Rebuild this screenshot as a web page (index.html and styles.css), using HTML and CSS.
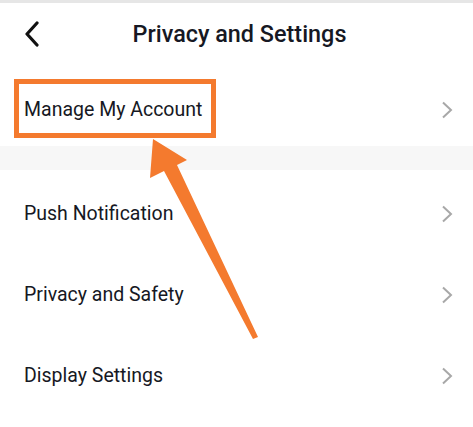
FILE: index.html
```html
<!DOCTYPE html>
<html>
<head>
<meta charset="utf-8">
<link rel="stylesheet" href="styles.css">
</head>
<body>
<div class="screen">
  <div class="topband"></div>
  <header class="header">
    <div class="back">
      <svg width="16" height="26" viewBox="0 0 16 26"><path d="M13 2 L3 13 L13 24" fill="none" stroke="#111" stroke-width="3.2" stroke-linecap="round" stroke-linejoin="round"/></svg>
    </div>
    <h1 class="title">Privacy and Settings</h1>
    <div></div>
  </header>
  <div class="row first"><span class="label">Manage My Account</span><svg class="chev" width="12" height="18" viewBox="0 0 12 18"><path d="M2 1.5 L10 9 L2 16.5" fill="none" stroke="#a8a8a8" stroke-width="2"/></svg></div>
  <div class="gap"></div>
  <div class="row"><span class="label">Push Notification</span><svg class="chev" width="12" height="18" viewBox="0 0 12 18"><path d="M2 1.5 L10 9 L2 16.5" fill="none" stroke="#a8a8a8" stroke-width="2"/></svg></div>
  <div class="row"><span class="label">Privacy and Safety</span><svg class="chev" width="12" height="18" viewBox="0 0 12 18"><path d="M2 1.5 L10 9 L2 16.5" fill="none" stroke="#a8a8a8" stroke-width="2"/></svg></div>
  <div class="row"><span class="label">Display Settings</span><svg class="chev" width="12" height="18" viewBox="0 0 12 18"><path d="M2 1.5 L10 9 L2 16.5" fill="none" stroke="#a8a8a8" stroke-width="2"/></svg></div>

  <div class="highlight"></div>
  <svg class="arrow" width="473" height="427" viewBox="0 0 473 427"><polygon points="153,139 187,160 177,165 258,337 253,339 164,171 150,178" fill="#f47a2e"/></svg>
</div>
</body>
</html>
```
FILE: styles.css
```css
html, body {
  margin: 0;
  padding: 0;
  background: #fff;
}
.screen {
  position: relative;
  width: 473px;
  height: 427px;
  overflow: hidden;
  font-family: Roboto, "Noto Sans", sans-serif;
  color: #161823;
}
.topband {
  height: 3px;
  background: #e6e6e6;
}
.header {
  height: 66px;
  display: grid;
  grid-template-columns: 1fr auto 1fr;
  align-items: center;
}
.back {
  padding-left: 24px;
  display: flex;
  align-items: center;
  margin-top: -4px;
}
.title {
  margin: -4px 0 0;
  font-size: 23.4px;
  font-weight: 500;
  padding-left: 6px;
}
.row {
  box-sizing: border-box;
  height: 81px;
  padding: 6px 20px 0 24px;
  display: flex;
  align-items: center;
  justify-content: space-between;
}
.row.first {
  height: 77px;
  padding-top: 4px;
}
.label {
  font-size: 19.5px;
}
.gap {
  height: 24px;
  background: #f7f7f7;
}
.highlight {
  position: absolute;
  left: 14px;
  top: 79px;
  width: 192px;
  height: 49px;
  border: 5px solid #f47a2e;
}
.arrow {
  position: absolute;
  left: 0;
  top: 0;
}
```
